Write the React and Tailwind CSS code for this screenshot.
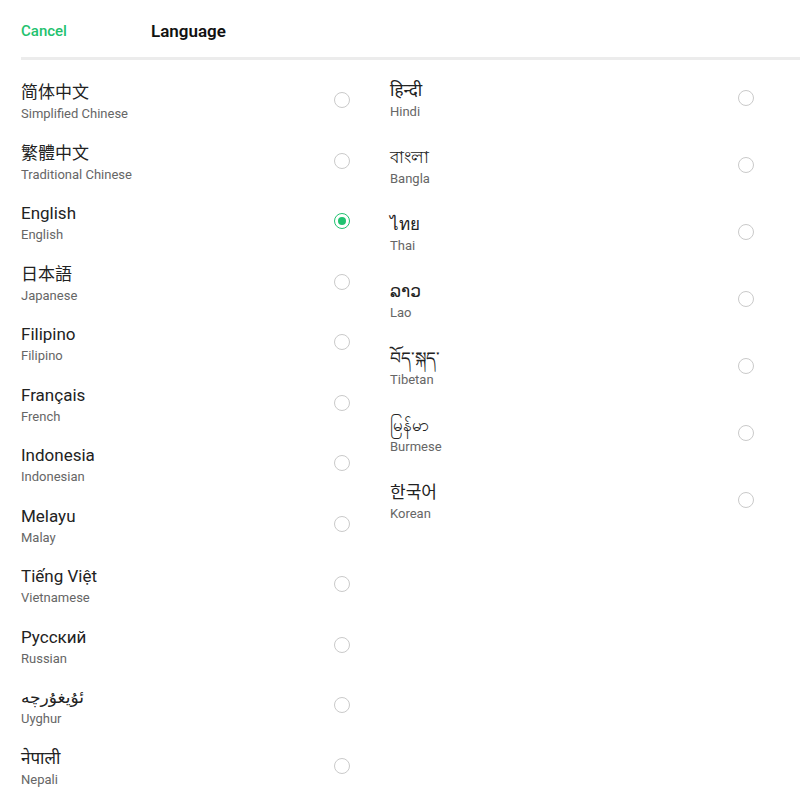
const left = [
  { name: "简体中文", sub: "Simplified Chinese" },
  { name: "繁體中文", sub: "Traditional Chinese" },
  { name: "English", sub: "English", checked: true },
  { name: "日本語", sub: "Japanese" },
  { name: "Filipino", sub: "Filipino" },
  { name: "Français", sub: "French" },
  { name: "Indonesia", sub: "Indonesian" },
  { name: "Melayu", sub: "Malay" },
  { name: "Tiếng Việt", sub: "Vietnamese" },
  { name: "Русский", sub: "Russian" },
  { name: "ئۇيغۇرچە", sub: "Uyghur" },
  { name: "नेपाली", sub: "Nepali" },
];

const right = [
  { name: "हिन्दी", sub: "Hindi" },
  { name: "বাংলা", sub: "Bangla" },
  { name: "ไทย", sub: "Thai" },
  { name: "ລາວ", sub: "Lao" },
  { name: "བོད་སྐད་", sub: "Tibetan" },
  { name: "မြန်မာ", sub: "Burmese" },
  { name: "한국어", sub: "Korean" },
];

function Radio({ checked }) {
  return checked ? (
    <span className="flex h-4 w-4 shrink-0 items-center justify-center rounded-full border-[1.5px] border-[#1fc26f]">
      <span className="block h-2 w-2 rounded-full bg-[#1fc26f]" />
    </span>
  ) : (
    <span className="block h-4 w-4 shrink-0 rounded-full border-[1.5px] border-[#cacaca]" />
  );
}

function Row({ item, height, radioRight }) {
  return (
    <div className={`flex items-center justify-between ${height}`}>
      <div className="flex flex-col">
        <span className="text-[17px] leading-[23px] text-[#222]">{item.name}</span>
        <span className="text-[13px] leading-[19px] text-[#666]">{item.sub}</span>
      </div>
      <div className={`mb-[4px] ${radioRight}`}>
        <Radio checked={item.checked} />
      </div>
    </div>
  );
}

export default function App() {
  return (
    <div
      className="h-[800px] w-[800px] overflow-hidden bg-white"
      style={{ fontFamily: 'Roboto, "Noto Sans", "Noto Sans CJK SC", "DejaVu Sans", sans-serif' }}
    >
      <header className="flex h-[57px] items-center pl-[21px] pt-[6px]">
        <button className="w-[130px] text-left text-[15px] font-medium text-[#1fc26f]">Cancel</button>
        <h1 className="text-[17px] font-semibold text-[#111]">Language</h1>
      </header>
      <div className="ml-[21px] h-[3px] bg-[#ececec]" />

      <div className="flex pl-[21px]">
        <div className="w-[369px] pt-[12px]">
          {left.map((item) => (
            <Row key={item.sub} item={item} height="h-[60.5px]" radioRight="mr-[40px]" />
          ))}
        </div>
        <div className="flex-1 pt-[6px]">
          {right.map((item) => (
            <Row key={item.sub} item={item} height="h-[67px]" radioRight="mr-[46px]" />
          ))}
        </div>
      </div>
    </div>
  );
}
